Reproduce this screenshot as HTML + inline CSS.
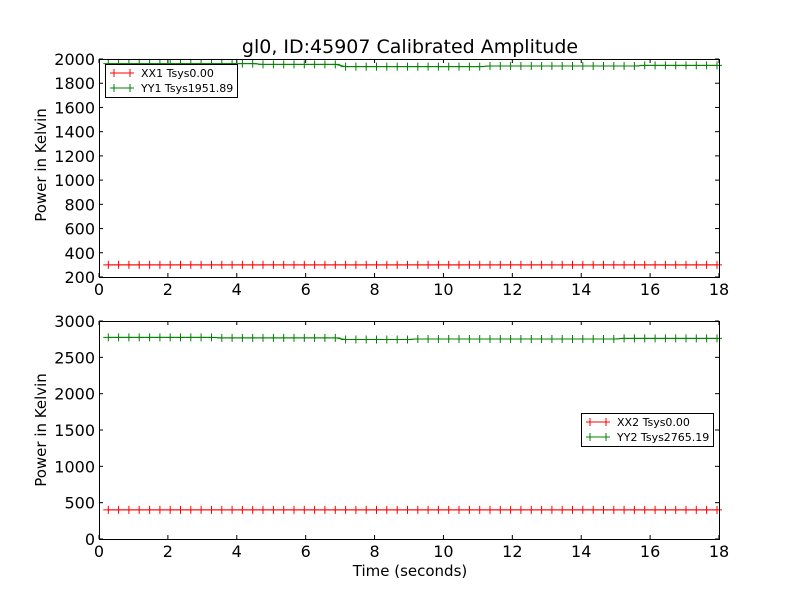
<!DOCTYPE html>
<html><head><meta charset="utf-8"><style>
html,body{margin:0;padding:0;background:#fff;width:800px;height:600px;overflow:hidden}
svg{display:block;font-family:"DejaVu Sans","Liberation Sans",sans-serif}
</style></head><body>
<svg id="s" width="800" height="600" xmlns="http://www.w3.org/2000/svg">
<rect width="800" height="600" fill="#fff"/>
<text x="410" y="53" font-size="19" text-anchor="middle">gl0, ID:45907 Calibrated Amplitude</text>
<text x="410" y="576" font-size="15" text-anchor="middle">Time (seconds)</text>
<text transform="translate(46,165) rotate(-90)" font-size="15" text-anchor="middle">Power in Kelvin</text>
<text transform="translate(46,430) rotate(-90)" font-size="15" text-anchor="middle">Power in Kelvin</text>
<g id="g"></g>
</svg>
<script>
var g=document.getElementById('g'),h='';
var X0=99,X1=719;function xp(t){return X0+t*(X1-X0)/18;}
function ax(top,bot,ymin,ymax,ystep){
 function yp(v){return bot-(v-ymin)*(bot-top)/(ymax-ymin);}
 for(var t=0;t<=18;t+=2){var x=xp(t);
  h+='<line x1="'+x+'" y1="'+bot+'" x2="'+x+'" y2="'+(bot-4)+'" stroke="#000"/>';
  h+='<line x1="'+x+'" y1="'+top+'" x2="'+x+'" y2="'+(top+4)+'" stroke="#000"/>';
  h+='<text x="'+x+'" y="'+(bot+18)+'" font-size="16" text-anchor="middle">'+t+'</text>';}
 for(var v=ymin;v<=ymax;v+=ystep){var y=yp(v);
  h+='<line x1="'+X0+'" y1="'+y+'" x2="'+(X0+4)+'" y2="'+y+'" stroke="#000"/>';
  h+='<line x1="'+X1+'" y1="'+y+'" x2="'+(X1-4)+'" y2="'+y+'" stroke="#000"/>';
  h+='<text x="'+(X0-4)+'" y="'+(y+6)+'" font-size="16" text-anchor="end">'+v+'</text>';}
 return yp;}
function series(yp,f,col){var d='',m='';
 for(var i=0;i<60;i++){var t=0.27+i*0.2995;var x=xp(t),y=yp(f(t));
  d+=(i?'L':'M')+x.toFixed(1)+' '+y.toFixed(1);
  m+='M'+(x-5).toFixed(1)+' '+y.toFixed(1)+'h10M'+x.toFixed(1)+' '+(y-4).toFixed(1)+'v8';}
 h+='<path d="'+d+'" fill="none" stroke="'+col+'" stroke-width="1"/><path d="'+m+'" fill="none" stroke="'+col+'" stroke-width="1"/>';}
var y1=ax(59,277,200,2000,200);
series(y1,function(t){return 300;},'#f00');
series(y1,function(t){if(t<4.6)return 1962;if(t<7)return 1955;if(t<11.3)return 1937;if(t<15.8)return 1942;return 1947;},'#008000');
var y2=ax(321,539,0,3000,500);
series(y2,function(t){return 400;},'#f00');
series(y2,function(t){if(t<3.3)return 2775;if(t<7)return 2768;if(t<9.2)return 2745;if(t<15)return 2752;return 2760;},'#008000');
h+='<rect x="99.5" y="59.5" width="620" height="218" fill="none" stroke="#000"/>';
h+='<rect x="99.5" y="321.5" width="620" height="218" fill="none" stroke="#000"/>';
function leg(x,y,a,b){
 h+='<rect x="'+x+'.5" y="'+y+'.5" width="132" height="33" fill="#fff" stroke="#000"/>';
 [[a,'#f00',9],[b,'#008000',24]].forEach(function(r){var yy=y+r[2];
  h+='<path d="M'+(x+5)+' '+yy+'h24M'+(x+9)+' '+(yy-4)+'v8M'+(x+25)+' '+(yy-4)+'v8" stroke="'+r[1]+'" fill="none"/>';
  h+='<text x="'+(x+36)+'" y="'+(yy+4)+'" font-size="11">'+r[0]+'</text>';});}
leg(105,64,'XX1 Tsys0.00','YY1 Tsys1951.89');
leg(581,413,'XX2 Tsys0.00','YY2 Tsys2765.19');
g.innerHTML=h;
</script>
</body></html>
